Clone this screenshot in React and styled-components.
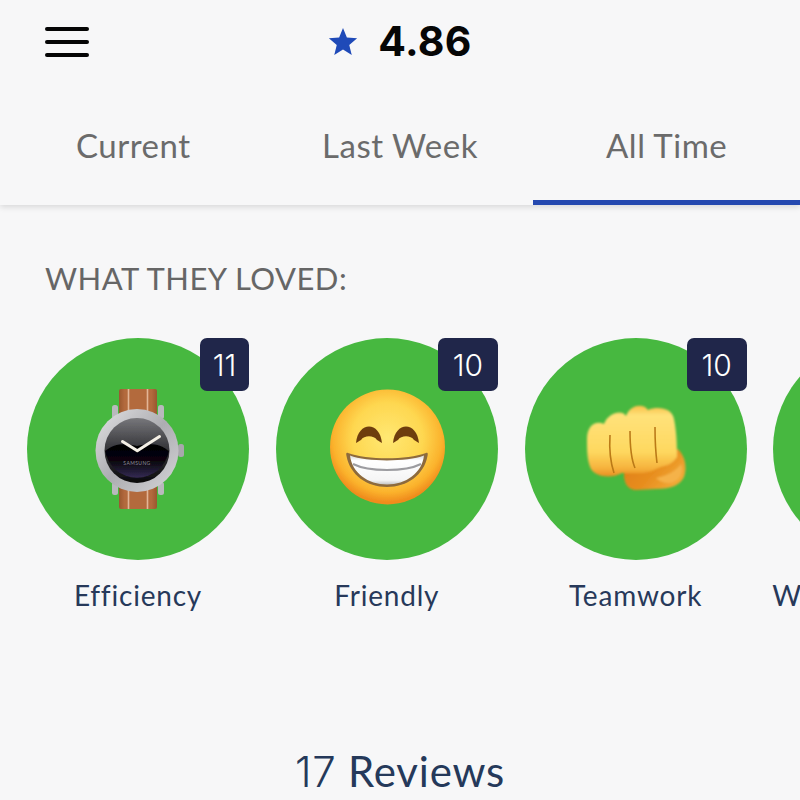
import React from "react";
import styled, { createGlobalStyle } from "styled-components";

const Global = createGlobalStyle`
  html, body { margin: 0; padding: 0; background: #f7f7f8; }
  body { font-family: "Lato", "Noto Sans", sans-serif; }
`;

const Page = styled.div`
  width: 800px;
  height: 800px;
  overflow: hidden;
  background: #f7f7f8;
  display: flex;
  flex-direction: column;
`;

const TopPanel = styled.div`
  height: 205px;
  flex-shrink: 0;
  display: flex;
  flex-direction: column;
  box-shadow: 0 2px 6px rgba(0, 0, 0, 0.13);
  background: #f7f7f8;
`;

const Header = styled.header`
  display: grid;
  grid-template-columns: 1fr auto 1fr;
  align-items: center;
  height: 83px;
  padding: 0 45px;
`;

const Burger = styled.div`
  display: flex;
  flex-direction: column;
  gap: 9px;
  width: 44px;
`;

const BurgerBar = styled.span`
  display: block;
  height: 4px;
  border-radius: 2px;
  background: #050505;
`;

const Rating = styled.div`
  display: flex;
  align-items: center;
  gap: 20px;
`;

const Score = styled.span`
  font-family: "Inter", "Lato", sans-serif;
  font-size: 41px;
  line-height: 1;
  font-weight: 700;
  letter-spacing: 0.3px;
  color: #060606;
`;

const Tabs = styled.nav`
  flex: 1;
  display: grid;
  grid-template-columns: repeat(3, 1fr);
`;

const Tab = styled.div`
  display: flex;
  align-items: center;
  justify-content: center;
  font-size: 33px;
  letter-spacing: 0.5px;
  color: #6b6b6b;
  padding-top: 6px;
  border-bottom: 5px solid ${(p) => (p.$active ? "#2549b0" : "transparent")};
`;

const Content = styled.main`
  flex: 1;
  display: flex;
  flex-direction: column;
`;

const Heading = styled.h2`
  margin: 54px 0 0 45px;
  font-size: 31px;
  line-height: 38px;
  font-weight: 400;
  letter-spacing: 0.5px;
  color: #666;
`;

const Row = styled.div`
  display: flex;
  gap: 26.8px;
  margin-top: 41px;
  padding-left: 27px;
`;

const Item = styled.div`
  width: 222px;
  flex-shrink: 0;
  display: flex;
  flex-direction: column;
  align-items: center;
`;

const Circle = styled.div`
  position: relative;
  width: 222px;
  height: 222px;
  border-radius: 50%;
  background: #47b840;
`;

const Badge = styled.span`
  position: absolute;
  top: 0;
  right: 0;
  height: 53px;
  width: ${(p) => (p.$wide ? "60px" : "49px")};
  display: flex;
  align-items: center;
  justify-content: center;
  border-radius: 7px;
  background: #20264a;
  color: #fff;
  font-family: "Inter", sans-serif;
  font-size: 30px;
  font-weight: 300;
`;

const EmojiSvg = styled.svg`
  display: block;
  width: 222px;
  height: 222px;
`;

const Label = styled.div`
  margin-top: 18px;
  font-size: 28px;
  line-height: 34px;
  letter-spacing: 0.8px;
  color: #27395a;
  white-space: nowrap;
`;

const ReviewsTitle = styled.h1`
  margin: 132px 0 0;
  text-align: center;
  font-size: 42px;
  line-height: 54px;
  font-weight: 400;
  letter-spacing: 0.8px;
  color: #25395a;
`;

const Numeral = styled.span`
  font-family: "Inter", sans-serif;
  font-weight: 300;
`;

const Watch = () => (
  <EmojiSvg viewBox="-111 -111 222 222">
    <defs>
      <linearGradient id="strap" x1="0" x2="1" y1="0" y2="0">
        <stop offset="0" stopColor="#99572f" />
        <stop offset="0.15" stopColor="#b36a3e" />
        <stop offset="0.85" stopColor="#b36a3e" />
        <stop offset="1" stopColor="#99572f" />
      </linearGradient>
      <linearGradient id="bezel" x1="0" x2="1" y1="0" y2="1">
        <stop offset="0" stopColor="#e2e2e4" />
        <stop offset="0.5" stopColor="#adadb1" />
        <stop offset="1" stopColor="#d6d6d9" />
      </linearGradient>
      <linearGradient id="faceTop" x1="0" x2="0" y1="0" y2="1">
        <stop offset="0" stopColor="#77777b" />
        <stop offset="0.45" stopColor="#38383c" />
        <stop offset="1" stopColor="#0a0a0c" />
      </linearGradient>
      <linearGradient id="faceBottom" x1="0" x2="0" y1="0" y2="1">
        <stop offset="0" stopColor="#020203" />
        <stop offset="0.5" stopColor="#08060c" />
        <stop offset="1" stopColor="#352b54" />
      </linearGradient>
      <filter id="softWatch" x="-10%" y="-10%" width="120%" height="120%">
        <feGaussianBlur stdDeviation="0.5" />
      </filter>
    </defs>
    <g filter="url(#softWatch)">
      <rect x="-19" y="-60" width="38" height="120" rx="2" fill="url(#strap)" />
      <path d="M-9.5-60V-36M9.5-60V-36M-9.5 38V60M9.5 38V60" stroke="#e3b596" strokeWidth="1.6" />
      <rect x="-26" y="-44" width="6" height="14" rx="2.5" fill="#b9b9bd" />
      <rect x="20" y="-44" width="6" height="14" rx="2.5" fill="#b9b9bd" />
      <rect x="-26" y="33" width="6" height="13" rx="2.5" fill="#b9b9bd" />
      <rect x="20" y="33" width="6" height="13" rx="2.5" fill="#b9b9bd" />
      <rect x="40" y="-5" width="6" height="13" rx="2.5" fill="#a8a8ac" />
      <circle cx="-1" cy="1.5" r="41.5" fill="url(#bezel)" />
      <circle cx="-1" cy="1.5" r="32.5" fill="url(#faceTop)" />
      <path d="M-33 2 C-24 -6 -12 -6 -1 -3 C10 -6 22 -6 31 2 A32.5 32.5 0 0 1 -33 2Z" fill="url(#faceBottom)" />
      <path d="M-15.5 -7.5 L-0.7 1.7 L21.5 -12.5" fill="none" stroke="#f5f0e6" strokeWidth="3" strokeLinecap="round" strokeLinejoin="round" />
    </g>
    <text x="-1" y="16" textAnchor="middle" fontSize="5" fontFamily="Lato, sans-serif" fill="#8d8a9c" letterSpacing="0.4">SAMSUNG</text>
  </EmojiSvg>
);

const Smile = () => (
  <EmojiSvg viewBox="-111 -111 222 222">
    <defs>
      <radialGradient id="smileFace" cx="0.5" cy="0.42" r="0.56">
        <stop offset="0" stopColor="#ffe873" />
        <stop offset="0.55" stopColor="#fed750" />
        <stop offset="0.85" stopColor="#fbb22c" />
        <stop offset="1" stopColor="#f08c1d" />
      </radialGradient>
      <linearGradient id="teeth" x1="0" x2="0" y1="0" y2="1">
        <stop offset="0" stopColor="#d8d8d8" />
        <stop offset="0.18" stopColor="#ffffff" />
        <stop offset="0.85" stopColor="#f5f5f5" />
        <stop offset="1" stopColor="#c4c4c4" />
      </linearGradient>
      <filter id="softSmile" x="-10%" y="-10%" width="120%" height="120%">
        <feGaussianBlur stdDeviation="0.5" />
      </filter>
    </defs>
    <g filter="url(#softSmile)">
      <circle cx="0.5" cy="-2" r="57.5" fill="url(#smileFace)" />
      <path d="M-31 -6 C-29 -28 -7 -28 -5 -6 C-7 -7 -8 -8 -10 -9 C-13 -14 -23 -14 -26 -9 C-28 -8 -29 -7 -31 -6Z" fill="#6e3d10" />
      <path d="M6 -6 C8 -28 30 -28 32 -6 C30 -7 29 -8 27 -9 C24 -14 14 -14 11 -9 C9 -8 8 -7 6 -6Z" fill="#6e3d10" />
      <path d="M-39 4 C-20 11 20 11 39 4 C41 3 41 5 40.5 7 C37 26 20 38 0 38 C-20 38 -37 26 -40.5 7 C-41 5 -41 3 -39 4Z" fill="#8d6a3c" />
      <path d="M-37 6.5 C-20 13 20 13 37 6.5 C35 24 19 35.5 0 35.5 C-19 35.5 -35 24 -37 6.5Z" fill="url(#teeth)" />
      <path d="M-34 15 C-18 23 18 23 34 15" fill="none" stroke="#9c9ca0" strokeWidth="2" />
    </g>
  </EmojiSvg>
);

const Fist = () => (
  <EmojiSvg viewBox="-111 -111 222 222">
    <defs>
      <linearGradient id="finger" x1="0" x2="0" y1="0" y2="1">
        <stop offset="0" stopColor="#f9bf47" />
        <stop offset="0.14" stopColor="#ffe27a" />
        <stop offset="0.65" stopColor="#fed860" />
        <stop offset="0.88" stopColor="#f6b33c" />
        <stop offset="1" stopColor="#e98f1f" />
      </linearGradient>
      <linearGradient id="palm" x1="0" x2="1" y1="0" y2="0.6">
        <stop offset="0" stopColor="#dc7b14" />
        <stop offset="0.6" stopColor="#e78d1e" />
        <stop offset="1" stopColor="#f2a936" />
      </linearGradient>
      <filter id="soft" x="-10%" y="-10%" width="120%" height="120%">
        <feGaussianBlur stdDeviation="0.8" />
      </filter>
      <filter id="softLine" x="-20%" y="-10%" width="140%" height="120%">
        <feGaussianBlur stdDeviation="0.7" />
      </filter>
    </defs>
    <g filter="url(#soft)">
      <path d="M-12 14 L34 4 L42 0 C50 8 51 20 48 28 C44 36 36 40 20 40 L0 41 C-7 41 -11 36 -12 28Z" fill="url(#palm)" />
      <path d="M-49 -10 C-49 -24 -40 -29 -32 -25 C-28 -36 -14 -40 -10 -33 C-6 -45 8 -46 12 -39 C22 -43 36 -41 38 -30 C41 -15 41 0 41 8 C34 18 28 16 20 20 C10 26 -5 24 -14 24 C-25 30 -40 28 -45 20 C-49 12 -49 0 -49 -10Z" fill="url(#finger)" />
      <path d="M20 29 C31 27 40 22 45 15 C47 20 46 26 42 30 C36 36 27 35 20 29Z" fill="#f5b24a" />
    </g>
    <path d="M-26 -14 C-27 2 -25 15 -22 24M-6 -18 C-6 0 -4 12 -1 19M19 -22 C19 -4 20 6 21 14" fill="none" stroke="#bb7a18" strokeWidth="1.6" filter="url(#softLine)" />
  </EmojiSvg>
);

const items = [
  { label: "Efficiency", count: 11, Art: Watch },
  { label: "Friendly", count: 10, Art: Smile, wide: true },
  { label: "Teamwork", count: 10, Art: Fist, wide: true },
  { label: "Work Knowledge" },
];

export default function App() {
  return (
    <Page>
      <Global />
      <TopPanel>
        <Header>
          <Burger>
            <BurgerBar />
            <BurgerBar />
            <BurgerBar />
          </Burger>
          <Rating>
            <svg width="30" height="30" viewBox="0 0 24 24">
              <path d="M12 .8l3.1 7.6 8.2.6-6.3 5.3 2 8L12 18l-7 4.3 2-8L.7 9l8.2-.6z" fill="#1f4ab8" />
            </svg>
            <Score>4.86</Score>
          </Rating>
          <span />
        </Header>
        <Tabs>
          <Tab>Current</Tab>
          <Tab>Last Week</Tab>
          <Tab $active>All Time</Tab>
        </Tabs>
      </TopPanel>
      <Content>
        <Heading>WHAT THEY LOVED:</Heading>
        <Row>
          {items.map(({ label, count, Art, wide }) => (
            <Item key={label}>
              <Circle>
                {Art && <Art />}
                {Art && <Badge $wide={wide}>{count}</Badge>}
              </Circle>
              <Label>{label}</Label>
            </Item>
          ))}
        </Row>
        <ReviewsTitle>
          <Numeral>17</Numeral> Reviews
        </ReviewsTitle>
      </Content>
    </Page>
  );
}
